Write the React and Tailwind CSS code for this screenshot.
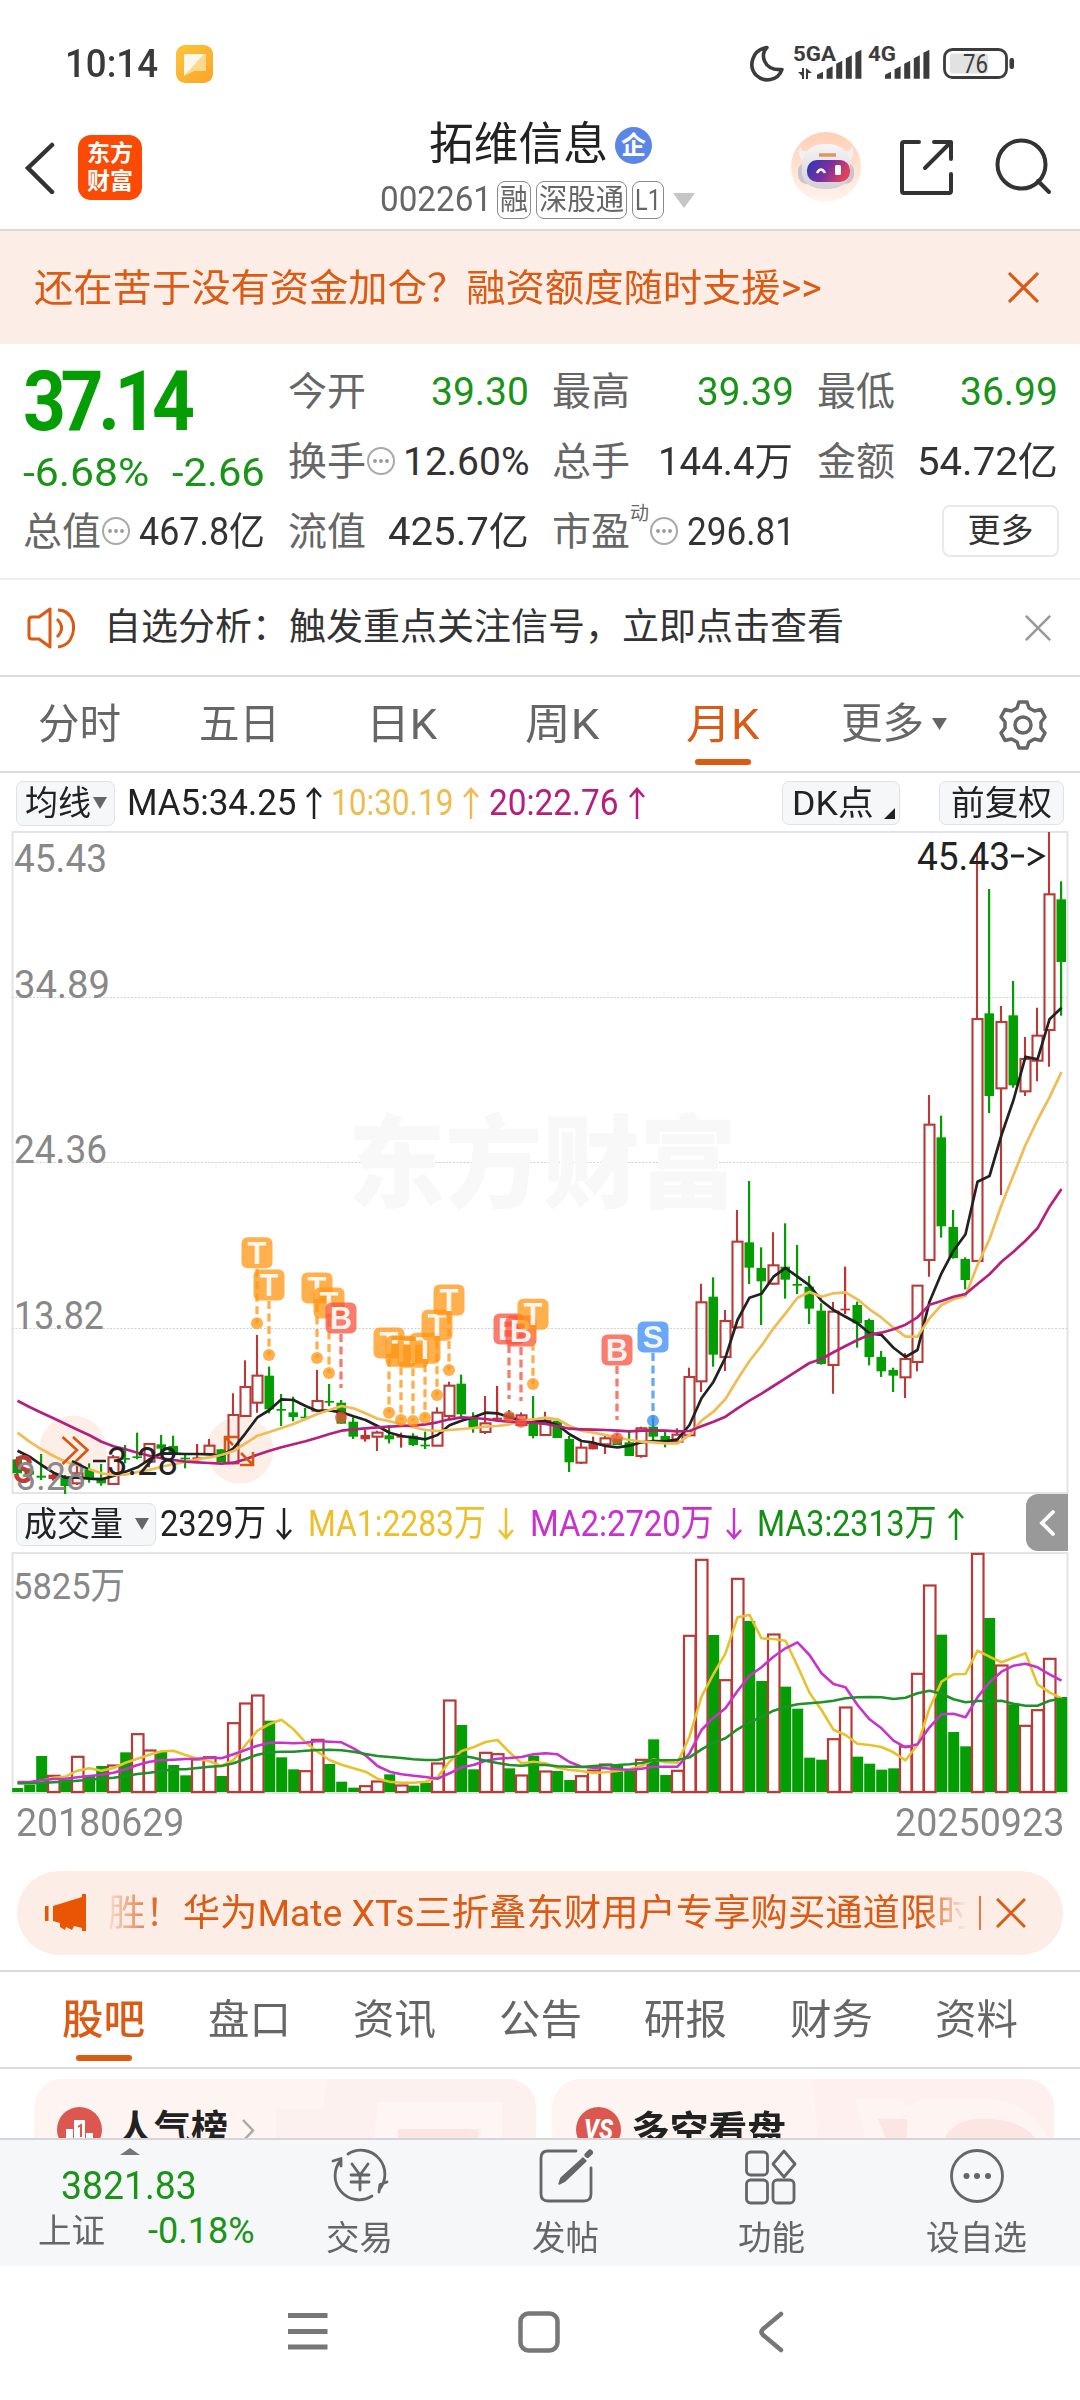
import React, { useLayoutEffect, useRef } from "react";

/* Text squeezed or stretched horizontally to an exact width. */
function Fit({ w, className = "", children }) {
  const ref = useRef(null);
  useLayoutEffect(() => {
    const el = ref.current;
    el.style.transform = "none";
    el.style.transform = `scaleX(${w / el.offsetWidth})`;
  }, [w]);
  return (
    <span className={"block shrink-0 " + className} style={{ width: w }}>
      <span ref={ref} className="inline-block origin-left whitespace-nowrap">
        {children}
      </span>
    </span>
  );
}

/* ---------- price data: [kind, bodyTop, bodyBottom, wickTop, wickBottom] ---------- */
const CANDLES = [
  ["g", 838, 880, 830, 890], ["g", 872, 884, 865, 890], ["g", 887, 893, 822, 900], ["r", 884, 897, 880, 902],
  ["g", 893, 918, 885, 942], ["h", 880, 910, 850, 915], ["g", 868, 895, 850, 908], ["g", 893, 910, 852, 917],
  ["h", 832, 912, 825, 912], ["g", 834, 839, 795, 850], ["g", 829, 834, 758, 838], ["h", 792, 845, 790, 862],
  ["g", 793, 806, 765, 820], ["g", 798, 822, 767, 830], ["g", 833, 838, 820, 865], ["r", 832, 840, 792, 845],
  ["h", 797, 822, 777, 822], ["g", 808, 846, 808, 846], ["h", 705, 850, 640, 853], ["h", 621, 708, 541, 708],
  ["h", 587, 668, 465, 698], ["g", 587, 688, 560, 700], ["g", 687, 692, 642, 738], ["g", 697, 711, 650, 724],
  ["g", 710, 715, 684, 718], ["h", 663, 692, 570, 692], ["g", 663, 668, 612, 678], ["g", 668, 731, 660, 731],
  ["g", 725, 770, 712, 777], ["r", 765, 778, 750, 785], ["h", 758, 770, 752, 813], ["g", 766, 778, 735, 790],
  ["r", 768, 773, 758, 803], ["g", 767, 795, 760, 798], ["g", 794, 799, 755, 807], ["h", 698, 797, 682, 797],
  ["h", 617, 708, 605, 718], ["g", 611, 703, 584, 710], ["g", 713, 746, 697, 758], ["h", 730, 756, 648, 762],
  ["r", 713, 719, 618, 719], ["g", 700, 718, 690, 718], ["h", 706, 735, 697, 735], ["g", 720, 768, 648, 775],
  ["h", 722, 765, 695, 768], ["g", 722, 774, 722, 774], ["g", 777, 847, 768, 876], ["h", 803, 848, 787, 852],
  ["r", 790, 808, 770, 808], ["h", 775, 793, 765, 822], ["g", 775, 795, 760, 795], ["g", 787, 828, 750, 828],
  ["h", 745, 828, 740, 833], ["g", 740, 770, 715, 780], ["g", 768, 783, 753, 802], ["h", 764, 785, 745, 785],
  ["h", 591, 766, 563, 766], ["h", 367, 604, 311, 636], ["g", 350, 524, 292, 560], ["h", 423, 531, 390, 573],
  ["h", 185, 442, 90, 446], ["g", 187, 263, 3, 312], ["g", 264, 304, 202, 435], ["h", 256, 311, 157, 315],
  ["g", 260, 299, 130, 356], ["g", 312, 317, 195, 342], ["g", 320, 386, 288, 432], ["g", 392, 552, 370, 554],
  ["h", 395, 555, 366, 641], ["r", 386, 391, 260, 402], ["g", 375, 430, 365, 503], ["g", 420, 531, 416, 556],
  ["g", 531, 574, 513, 591], ["g", 570, 587, 563, 636], ["h", 537, 592, 519, 654], ["h", 317, 546, 317, 574],
  ["h", -166, 240, -255, 290], ["g", -128, 139, -193, 173], ["g", 141, 234, 90, 236], ["g", 237, 300, 232, 328],
  ["h", -483, 243, -987, 243], ["g", -500, -252, -873, -201], ["h", -474, -275, -522, 45], ["g", -494, -284, -597, -277],
  ["h", -363, -266, -429, -252], ["h", -433, -358, -517, -296], ["h", -857, -450, -1044, -340], ["g", -842, -654, -896, -493],
];
const MA5 = [812, 830, 855, 878, 893, 893, 896, 898, 888, 875, 862, 838, 820, 821, 822, 822, 823, 828, 805, 760, 712, 690, 658, 660, 678, 693, 691, 697, 709, 720, 738, 758, 768, 773, 778, 765, 736, 722, 712, 698, 700, 712, 722, 725, 724, 735, 763, 783, 788, 798, 802, 797, 787, 783, 784, 778, 735, 655, 605, 532, 420, 353, 341, 290, 264, 290, 316, 362, 390, 410, 430, 460, 465, 503, 531, 510, 365, 280, 212, 163, 5, -12, -135, -240, -370, -362, -482, -517];
const MA10 = [758, 785, 808, 828, 845, 855, 868, 880, 885, 884, 876, 870, 860, 853, 845, 838, 832, 825, 813, 790, 767, 756, 744, 732, 717, 702, 690, 678, 685, 700, 716, 724, 733, 742, 750, 753, 750, 747, 744, 740, 738, 733, 722, 718, 713, 718, 738, 752, 758, 765, 772, 780, 785, 787, 790, 790, 765, 722, 695, 657, 598, 543, 497, 445, 400, 353, 336, 350, 340, 337, 358, 388, 413, 443, 470, 470, 415, 375, 358, 347, 255, 178, 75, -15, -105, -180, -248, -324];
const MA20 = [662, 681, 698, 715, 732, 749, 766, 785, 799, 808, 818, 827, 835, 840, 845, 847, 849, 851, 848, 838, 824, 812, 802, 793, 784, 773, 762, 752, 748, 745, 742, 740, 738, 737, 733, 727, 718, 712, 714, 717, 722, 725, 727, 728, 732, 738, 746, 748, 749, 750, 752, 754, 752, 751, 752, 754, 753, 739, 725, 710, 685, 662, 641, 618, 595, 572, 549, 537, 517, 498, 480, 464, 458, 448, 434, 412, 374, 363, 350, 342, 312, 283, 245, 215, 182, 145, 80, 27];
/* trade markers: [index, letter, badgeY, dotY] */
const MARKS = [
  [20, "T", 218, 430], [21, "T", 315, 525], [25, "T", 324, 534], [26, "T", 369, 579], [27, "B", 414, 712],
  [31, "T", 489, 698], [32, "T", 514, 720], [33, "T", 517, 723], [34, "T", 505, 713], [35, "T", 436, 645], [36, "T", 360, 570],
  [41, "B", 447, 710], [42, "B", 453, 725], [43, "T", 403, 612], [50, "B", 510, 775], [53, "S", 471, 722],
];
const MARK_COLOR = { T: "#ff9410", B: "#f8503c", S: "#3a8af5" };

const VOL = "894g 884g 798g 856r 868g 799r 857g 828g 825r 787g 731r 780r 786g 825g 856g 807r 800r 858g 698r 639r 615r 692g 802g 838g 842r 748r 822g 875g 893g 887r 873r 853g 885r 887g 878g 819r 630r 705g 838g 787r 791r 835g 855r 797g 843r 843g 870g 857r 840r 822r 828g 842g 808r 748g 855g 841r 436r 208r 435g 569r 265r 393g 573g 432r 590g 656g 803g 809g 746r 651r 800g 821g 839g 835g 768r 550r 285r 434g 726g 769g 190r 384g 525r 643g 706r 659r 505r 621g".split(" ");
const VMA1 = [880, 879, 872, 863, 860, 842, 835, 842, 834, 818, 806, 794, 784, 782, 795, 806, 814, 828, 810, 765, 722, 702, 689, 718, 757, 785, 810, 824, 835, 845, 866, 875, 878, 878, 875, 862, 815, 783, 772, 756, 750, 787, 820, 815, 820, 833, 840, 843, 849, 847, 843, 838, 828, 808, 817, 818, 740, 620, 552, 490, 382, 375, 445, 447, 452, 528, 608, 660, 719, 735, 761, 765, 771, 787, 811, 765, 655, 575, 553, 552, 482, 500, 517, 503, 490, 583, 607, 625];
const VMA2 = [876, 876, 871, 867, 866, 862, 858, 854, 848, 838, 825, 815, 811, 809, 807, 806, 803, 805, 793, 780, 767, 758, 758, 760, 758, 753, 755, 757, 775, 796, 828, 845, 853, 857, 861, 866, 850, 832, 825, 812, 806, 804, 801, 793, 790, 793, 816, 830, 833, 835, 838, 840, 836, 830, 830, 830, 790, 720, 683, 655, 603, 557, 532, 500, 475, 457, 495, 550, 582, 592, 645, 688, 715, 752, 772, 763, 712, 673, 671, 682, 622, 577, 545, 527, 521, 532, 553, 572];
const VMA3 = [880, 880, 879, 877, 875, 872, 869, 866, 863, 858, 852, 848, 843, 838, 838, 834, 830, 828, 820, 807, 794, 787, 785, 785, 782, 780, 779, 781, 785, 792, 798, 801, 804, 808, 810, 810, 802, 797, 803, 812, 819, 825, 827, 824, 825, 829, 830, 831, 828, 826, 825, 823, 819, 810, 811, 810, 802, 778, 758, 745, 718, 697, 681, 662, 651, 643, 640, 637, 632, 625, 622, 621, 622, 627, 623, 610, 602, 611, 628, 637, 633, 633, 632, 641, 647, 647, 632, 626];

const cx = (i) => 17.5 + 12 * i;
const py = (v) => v / 3 + 1180;
const vy = (v) => v / 3 + 1490;
const path = (arr, f) => arr.map((v, i) => `${i ? "L" : "M"}${cx(i).toFixed(1)} ${f(v).toFixed(1)}`).join("");

const RED = "#b93a36";
const GREEN = "#049e04";

function Label({ x, y, w, size = 38, fill = "#888", children, ...rest }) {
  return (
    <text x={x} y={y} fontSize={size} fill={fill} textLength={w} lengthAdjust="spacingAndGlyphs" {...rest}>
      {children}
    </text>
  );
}

function PriceChart() {
  return (
    <svg width="1080" height="661" viewBox="0 832 1080 661" className="block overflow-visible">
      <g fill="none" stroke="#e1e1e3" strokeWidth="1.8">
        <rect x="12.5" y="832" width="1055" height="661" />
      </g>
      <g stroke="#d2d2d2" strokeWidth="1" strokeDasharray="2 1.5">
        <path d="M12 997.5H1067M12 1162.5H1067M12 1328.5H1067" />
      </g>
      <Label x="348" y="1200" w="389" size="101" fill="#f8f8f8" fontWeight="900">东方财富</Label>
      <circle cx="73" cy="1449" r="33.5" fill="#fdeee8" />
      <circle cx="240" cy="1450" r="33.5" fill="#fdeee8" />
      <Label x="14" y="872" w="93">45.43</Label>
      <Label x="14" y="998" w="96">34.89</Label>
      <Label x="14" y="1163" w="93">24.36</Label>
      <Label x="14" y="1329" w="90">13.82</Label>
      {CANDLES.map(([k, t, b, h, l], i) => {
        const x = cx(i);
        const T = py(t), B = py(b);
        if (k === "h")
          return (
            <g key={i} stroke={RED} strokeWidth="2.1" fill="none">
              <path d={`M${x - 0.5} ${py(h)}V${T}M${x - 0.5} ${B}V${py(l)}`} />
              <rect x={x - 5} y={T} width="10" height={Math.max(B - T, 1)} />
            </g>
          );
        const c = k === "r" ? "#c23030" : GREEN;
        return (
          <g key={i} fill={c}>
            <rect x={x - 1.5} y={py(h)} width="2.2" height={(l - h) / 3} />
            <rect x={x - 5} y={T} width="9.5" height={B - T} />
          </g>
        );
      })}
      <g fill="none" strokeWidth="2.7" strokeLinejoin="round">
        <path d={path(MA5, py)} stroke="#222" />
        <path d={path(MA10, py)} stroke="#efbc55" />
        <path d={path(MA20, py)} stroke="#b5207c" />
      </g>
      {MARKS.map(([i, c, y, d]) => (
        <g key={i}>
          <path d={`M${cx(i) - 0.5} ${py(y) + 16}V${py(c === "B" ? y + 210 : d)}`} stroke={MARK_COLOR[c]} strokeWidth="3.3" strokeDasharray="8 4.5" opacity=".75" />
          <circle cx={cx(i) - 0.5} cy={py(d)} r="6" fill={MARK_COLOR[c]} opacity=".75" />
          <rect x={cx(i) - 16} y={py(y) - 15.5} width="31" height="31" rx="6" fill={MARK_COLOR[c]} opacity=".75" />
          <text x={cx(i) - 0.5} y={py(y) + 11} fontSize="31" fontWeight="700" fill="#fff" opacity=".9" textAnchor="middle" className="font-['Liberation_Sans',sans-serif]">{c}</text>
        </g>
      ))}
      <g fill="none" stroke="#d9560f" strokeWidth="2.6">
        <path d="M62.500 1437L77 1450L62.500 1464M73 1437L87.500 1450L73 1464" />
        <path d="M225 1450V1437H238M225 1437L233 1445M241 1453L253 1465M253 1452V1465H240" />
      </g>
      <text x="13" y="1483" fontSize="38" fontWeight="700" fill="#c23a38" textLength="20" lengthAdjust="spacingAndGlyphs">S</text>
      <Label x="16" y="1490" w="70" fill="#8a8a8a">3.28</Label>
      <path d="M93 1461H106" stroke="#222" strokeWidth="2.5" />
      <Label x="107" y="1475" w="71" fill="#222">3.28</Label>
      <path d="M72 1461L88 1469" stroke="#222" strokeWidth="2.500" />
      <Label x="917" y="870" w="93" fill="#222">45.43</Label>
      <path d="M1011 856H1024M1028 848L1043 856L1028 865" stroke="#222" strokeWidth="2.8" fill="none" />
    </svg>
  );
}

function VolumeChart() {
  return (
    <svg width="1080" height="244" viewBox="0 1552 1080 244" className="block">
      <rect x="12.5" y="1553" width="1055" height="240" fill="none" stroke="#e1e1e3" strokeWidth="1.8" />
      <Label x="13" y="1599" w="112" size="37">5825万</Label>
      {VOL.map((s, i) => {
        const y = vy(parseInt(s, 10));
        return s.endsWith("g") ? (
          <rect key={i} x={cx(i) - 5.3} y={y} width="11" height={1792 - y} fill={GREEN} />
        ) : (
          <rect key={i} x={cx(i) - 5.5} y={y + 0.5} width="11.500" height={1791.5 - y} fill="#fff" stroke={RED} strokeWidth="2.2" />
        );
      })}
      <g fill="none" strokeWidth="2.6" strokeLinejoin="round">
        <path d={path(VMA1, vy)} stroke="#e8c22c" />
        <path d={path(VMA2, vy)} stroke="#c733cb" />
        <path d={path(VMA3, vy)} stroke="#20902a" />
      </g>
    </svg>
  );
}

const Arrow = ({ up, className }) => (
  <svg width="18" height="34" viewBox="0 0 18 34" fill="none" stroke="currentColor" strokeWidth="2.5" className={"shrink-0 " + className}>
    {up ? <path d="M9 33V3M2 11L9 3L16 11" /> : <path d="M9 1V31M2 23L9 31L16 23" />}
  </svg>
);

const Cross = ({ size, w = 3, className = "" }) => (
  <svg width={size} height={size} viewBox="0 0 30 30" fill="none" stroke="currentColor" strokeWidth={w} className={"shrink-0 " + className}>
    <path d="M1 1L29 29M29 1L1 29" />
  </svg>
);

const Info = () => (
  <svg width="30" height="30" viewBox="0 0 30 30" className="mt-[-2px] shrink-0">
    <circle cx="15" cy="15" r="13" fill="none" stroke="#a9a9a9" strokeWidth="2" />
    <g fill="#999"><circle cx="9" cy="15" r="1.900" /><circle cx="15" cy="15" r="1.900" /><circle cx="21" cy="15" r="1.900" /></g>
  </svg>
);

function StatusBar() {
  const bars = (x0) =>
    [7, 12.500, 18, 23.500, 29].map((h, k) => (
      <path key={k} d={`M${x0 + k * 9.6} ${34.700 - h + 3}l6 -3V34.700h-6z`} fill="#3c3c3c" />
    ));
  return (
    <div className="flex h-[104px] items-start pt-[44px] pl-[65px]">
      <Fit w={93} className="text-[39px] leading-[41px] font-medium text-[#3a3a3a]">10:14</Fit>
      <svg width="38" height="38" viewBox="0 0 38 38" className="mt-[1px] ml-[18px]">
        <defs>
          <linearGradient id="note" x1="0" y1="0" x2="1" y2="1"><stop offset="0" stopColor="#fbc63c" /><stop offset="1" stopColor="#fba428" /></linearGradient>
        </defs>
        <rect width="37" height="38" rx="9" fill="url(#note)" />
        <path d="M8 9H30V26H18L8 31Z" fill="#fcd98c" />
        <path d="M8 9H28L8 31Z" fill="#fff8ea" />
      </svg>
      <svg width="268" height="42" viewBox="0 0 268 42" className="ml-[536px] overflow-visible">
        <path d="M17 3.500C10 9 12.500 27 32 25.500C28 37 14 39 6 31C-2 22 2 6 17 3.500Z" fill="none" stroke="#3c3c3c" strokeWidth="3.600" strokeLinejoin="round" />
        <text x="43" y="17" fontSize="21" fontWeight="700" fill="#3c3c3c" textLength="43" lengthAdjust="spacingAndGlyphs">5GA</text>
        <path d="M54 24v11h-2v-3l-4-4h4v-4zM58 25v10h-2V24l6 5h-4z" fill="#3c3c3c" />
        {bars(67)}
        <text x="118" y="17" fontSize="21" fontWeight="700" fill="#3c3c3c" textLength="28" lengthAdjust="spacingAndGlyphs">4G</text>
        {bars(135)}
        <rect x="194.500" y="5.500" width="62" height="28" rx="8" fill="none" stroke="#3c3c3c" strokeWidth="2.800" />
        <rect x="200" y="9.500" width="38" height="20" rx="3" fill="#e2e2e2" />
        <rect x="259.500" y="14" width="4.500" height="11" rx="2" fill="#3c3c3c" />
        <text x="213" y="29" fontSize="26" fill="#3c3c3c" textLength="25" lengthAdjust="spacingAndGlyphs">76</text>
      </svg>
    </div>
  );
}

const Tag = ({ w, children }) => (
  <span className="flex h-[38px] items-center rounded-[8px] border-[1.5px] border-[#8a8a8a] px-[2px] text-[29px] leading-none text-[#666]">
    <Fit w={w}>{children}</Fit>
  </span>
);

function Header() {
  return (
    <div className="flex h-[127px] items-start border-b-2 border-[#d9dadc]">
      <div className="flex w-[380px] items-center pt-[31px] pl-[24px]">
        <svg width="32" height="52" viewBox="0 0 32 52" fill="none" stroke="#333" strokeWidth="4.500" strokeLinecap="round"><path d="M28 3L4 26L28 50" /></svg>
        <div className="ml-[22px] grid h-[65px] w-[64px] grid-cols-1 content-center justify-items-center rounded-[13px] bg-[#fa4a04] text-[23px] leading-[28px] font-bold text-white">
          <span>东方</span>
          <span>财富</span>
        </div>
      </div>
      <div className="w-[331px] pt-[15px]">
        <div className="flex h-[52px] items-center pl-[49px]">
          <Fit w={179} className="text-[45px] leading-[52px] text-[#222]">拓维信息</Fit>
          <span className="ml-[7px] flex size-[37px] items-center justify-center rounded-full bg-[#5b86e6] text-[25px] leading-none font-bold text-white">企</span>
        </div>
        <div className="mt-[9px] flex h-[40px] items-center gap-[5px]">
          <Fit w={112} className="text-[35px] leading-[40px] text-[#666]">002261</Fit>
          <Tag w={28}>融</Tag>
          <Tag w={85}>深股通</Tag>
          <Tag w={26}>L1</Tag>
          <svg width="22" height="15" viewBox="0 0 22 15" className="ml-[4px]"><path d="M0 0H22L11 15Z" fill="#c6c6c6" /></svg>
        </div>
      </div>
      <svg width="280" height="80" viewBox="0 0 280 80" className="mt-[27px] ml-[69px]" fill="none">
        <defs>
          <linearGradient id="halo" x1="0" y1="0" x2="0" y2="1"><stop offset="0" stopColor="#ffcfb4" /><stop offset="1" stopColor="#fff4ee" /></linearGradient>
          <linearGradient id="visor" x1="0" y1="0" x2="1" y2=".3"><stop offset="0" stopColor="#2a3ab4" /><stop offset=".55" stopColor="#7a2fa0" /><stop offset="1" stopColor="#e0405c" /></linearGradient>
          <linearGradient id="head" x1="0" y1="0" x2="0" y2="1"><stop offset="0" stopColor="#f7f5f6" /><stop offset="1" stopColor="#d3cfd6" /></linearGradient>
        </defs>
        <circle cx="46" cy="36" r="35" fill="url(#halo)" />
        <path d="M20 15q2 8 9 4l-5 12q-8-6-4-16zM72 15q-2 8-9 4l5 12q8-6 4-16z" fill="#f3f0f1" />
        <rect x="18" y="31" width="56" height="22" rx="9" fill="#c9c5cd" />
        <path d="M22 34Q23 13 46 13Q69 13 70 34V44Q66 58 46 58Q26 58 22 44Z" fill="url(#head)" />
        <path d="M39 24h17" stroke="#d99a62" strokeWidth="3.500" />
        <rect x="27" y="29" width="43" height="22" rx="10" fill="url(#visor)" />
        <path d="M37 42q4-7 8 0" stroke="#fff" strokeWidth="2.500" />
        <rect x="55" y="34" width="6" height="10" rx="1.500" fill="#fff" />
        <g stroke="#333" strokeWidth="4" strokeLinecap="round" strokeLinejoin="round">
          <path d="M139 11H124Q122 11 122 13V60Q122 62 124 62H169Q171 62 171 60V43M154 11H171V28M171 11L145 37" />
          <circle cx="241.500" cy="33.500" r="24" />
          <path d="M258 50L269 61" />
        </g>
      </svg>
    </div>
  );
}

const G = "text-[#1a9418]";
const D = "text-[#333]";
function Stat({ label, value, lw = 78, vw, color = D, info, sup, w }) {
  return (
    <div className="flex h-[70px] items-center justify-between" style={{ width: w }}>
      <div className="flex items-center">
        <Fit w={lw} className="text-[39px] text-[#666]">{label}</Fit>
        {sup && <span className="mt-[-38px] text-[19px] leading-none text-[#666]">{sup}</span>}
        {info && <Info />}
      </div>
      <Fit w={vw} className={"text-[39px] " + color}>{value}</Fit>
    </div>
  );
}

function Quote() {
  return (
    <div className="flex h-[234px] pt-[13px] pl-[23px] leading-[50px]">
      <div className="w-[265px]">
        <Fit w={167} className="h-[84px] text-[83px] leading-[90px] font-bold tracking-[-6px] text-[#049e04]">37.14</Fit>
        <div className="flex h-[62px] items-center pt-[2px]">
          <Fit w={126} className={"text-[39px] " + G}>-6.68%</Fit>
          <Fit w={93} className={"ml-[23px] text-[39px] " + G}>-2.66</Fit>
        </div>
        <div className="mt-[-6px]"><Stat label="总值" info value="467.8亿" vw={126} w={242} /></div>
      </div>
      <div className="w-[264px]">
        <Stat label="今开" value="39.30" vw={98} color={G} w={241} />
        <Stat label="换手" info value="12.60%" vw={127} w={242} />
        <Stat label="流值" value="425.7亿" vw={141} w={241} />
      </div>
      <div className="w-[265px]">
        <Stat label="最高" value="39.39" vw={97} color={G} w={242} />
        <Stat label="总手" value="144.4万" vw={135} w={241} />
        <Stat label="市盈" sup="动" info value="296.81" vw={108} w={243} />
      </div>
      <div>
        <Stat label="最低" value="36.99" vw={98} color={G} w={241} />
        <Stat label="金额" value="54.72亿" vw={141} w={241} />
        <div className="mt-[8px] ml-[125px] flex h-[52px] w-[117px] items-center justify-center rounded-[8px] border-2 border-[#e9e9eb] text-[33px] text-[#333]">更多</div>
      </div>
    </div>
  );
}

function PeriodTabs() {
  const tabs = [["分时", 83, 159], ["五日", 81, 161], ["日K", 71, 162], ["周K", 74, 160], ["月K", 73, 161]];
  return (
    <div className="flex h-[98px] items-center border-y-2 border-[#dcdcde] text-[42px] leading-[56px] text-[#666]">
      {tabs.map(([t, w, cell], i) => (
        <div key={t} className={"relative flex h-full items-center justify-center pt-[1px] " + (i === 4 ? "text-[#db5a14]" : "")} style={{ width: cell }}>
          <Fit w={w}>{t}</Fit>
          {i === 4 && <span className="absolute bottom-[6px] h-[6px] w-[56px] rounded-full bg-[#db5a14]" />}
        </div>
      ))}
      <Fit w={83} className="ml-[38px]">更多</Fit>
      <svg width="15" height="12" viewBox="0 0 15 12" className="ml-[8px]"><path d="M0 0H15L7.500 12Z" fill="#666" /></svg>
      <svg width="48" height="50" viewBox="0 0 48 50" className="mt-[2px] ml-[52px]" fill="none" stroke="#666" strokeWidth="3.500" strokeLinejoin="round">
        <path d="M20 2H28L30 8L35.500 11L42 9.500L46 17L42 22V28L46 33L42 40.500L35.500 39L30 42L28 48H20L18 42L12.500 39L6 40.500L2 33L6 28V22L2 17L6 9.500L12.500 11L18 8Z" />
        <circle cx="24" cy="25" r="8" />
      </svg>
    </div>
  );
}

const Pill = ({ className, children }) => (
  <div className={"flex items-center justify-center rounded-[7px] border-[1.5px] border-[#dfe2e7] bg-[#f6f7f9] text-[34px] leading-[40px] text-[#222] " + className}>{children}</div>
);
const Down = ({ className = "" }) => <svg width="14" height="12" viewBox="0 0 14 12" className={"shrink-0 " + className}><path d="M0 0H14L7 12Z" fill="#666" /></svg>;

function MaRow() {
  return (
    <div className="flex h-[59px] items-center pt-[1px] pl-[16px] text-[37px] leading-[44px]">
      <Pill className="h-[45px] w-[99px] gap-[2px]"><Fit w={66}>均线</Fit><Down /></Pill>
      <Fit w={169} className="ml-[12px] text-[#222]">MA5:34.25</Fit>
      <Arrow up className="ml-[9px] text-[#222]" />
      <Fit w={122} className="ml-[8px] text-[#f0bb4c]">10:30.19</Fit>
      <Arrow up className="ml-[9px] text-[#f0bb4c]" />
      <Fit w={129} className="ml-[9px] text-[#b81d7d]">20:22.76</Fit>
      <Arrow up className="ml-[10px] text-[#b81d7d]" />
      <Pill className="ml-[136px] h-[44px] w-[118px] !justify-start pl-[9px]">
        <Fit w={82}>DK点</Fit>
        <svg width="11" height="11" viewBox="0 0 11 11" className="mt-[20px] ml-[10px]"><path d="M11 0V11H0Z" fill="#222" /></svg>
      </Pill>
      <Pill className="ml-[39px] h-[44px] w-[125px]"><Fit w={101}>前复权</Fit></Pill>
    </div>
  );
}

function VolRow() {
  return (
    <div className="flex h-[59px] items-center pt-[3px] pl-[16px] text-[37px] leading-[44px]">
      <Pill className="h-[43px] w-[140px] gap-[12px]"><Fit w={99}>成交量</Fit><Down /></Pill>
      <Fit w={106} className="ml-[4px] text-[#222]">2329万</Fit>
      <Arrow className="ml-[9px] text-[#222]" />
      <Fit w={178} className="ml-[15px] text-[#edbf28]">MA1:2283万</Fit>
      <Arrow className="ml-[11px] text-[#edbf28]" />
      <Fit w={184} className="ml-[15px] text-[#ca2fcf]">MA2:2720万</Fit>
      <Arrow className="ml-[11px] text-[#ca2fcf]" />
      <Fit w={180} className="ml-[14px] text-[#148f14]">MA3:2313万</Fit>
      <Arrow up className="ml-[10px] text-[#148f14]" />
      <div className="mt-[-3px] ml-[61px] flex h-[57px] w-[42px] items-center justify-center rounded-l-[12px] bg-[#999]">
        <svg width="16" height="28" viewBox="0 0 16 28" fill="none" stroke="#fff" strokeWidth="3.800" strokeLinecap="round"><path d="M14 3L3 14L14 25" /></svg>
      </div>
    </div>
  );
}

function Promo() {
  return (
    <div className="mx-[17px] mt-[24px] flex h-[84px] items-center rounded-full bg-[#fceee6] pl-[27px] text-[#db5a14]">
      <svg width="44" height="38" viewBox="0 0 44 38" fill="#e95502" className="shrink-0"><path d="M1 12H4.500V27H1zM9 12L38 3V0H42V37H38V34L30 32L28 36L22 33L21 36L16 33V29L9 27z" /></svg>
      <div className="ml-[13px] flex h-[60px] w-[866px] items-center overflow-hidden pt-[1px] pl-[7px] text-[37px] leading-[50px] [mask-image:linear-gradient(90deg,transparent,#000_7%,#000_95%,transparent)]">
        <Fit w={867}>胜！华为Mate XTs三折叠东财用户专享购买通道限时</Fit>
      </div>
      <span className="ml-[12px] h-[34px] w-[2px] shrink-0 bg-[#e57a3e]" />
      <Cross size={30} w={3} className="ml-[15px]" />
    </div>
  );
}

function SectionTabs() {
  return (
    <div className="mt-[15px] flex h-[99px] items-center border-y-2 border-[#d9dadc] pl-[31px] text-[41px] leading-[56px] text-[#666]">
      {["股吧", "盘口", "资讯", "公告", "研报", "财务", "资料"].map((t, i) => (
        <div key={t} className={"relative flex h-full w-[145.5px] items-center justify-center pt-[1px] " + (i ? "" : "font-medium text-[#db5a14]")}>
          <Fit w={83}>{t}</Fit>
          {!i && <span className="absolute bottom-[6px] h-[6px] w-[56px] rounded-full bg-[#db5a14]" />}
        </div>
      ))}
    </div>
  );
}

function Cards() {
  return (
    <div className="flex h-[69px] gap-[16px] overflow-hidden pt-[10px] pl-[34px]">
      <div className="relative flex h-[100px] w-[502px] shrink-0 overflow-hidden rounded-t-[28px] bg-[#fef5f3] pt-[28px] pl-[23px]">
        <svg width="260" height="60" viewBox="0 0 260 60" className="absolute top-0 right-0">
          <path d="M50 0H260V60H0V30H47Z" fill="#fdf1ef" /><path d="M102 23H226V60H205V50H122V60H98Z" fill="#fef6f4" /><path d="M122 50H202V60H122Z" fill="#fce5e2" />
        </svg>
        <svg width="45" height="45" viewBox="0 0 45 45" className="shrink-0"><circle cx="22.500" cy="22.500" r="22.500" fill="#dc5750" /><path d="M9 22h7v18H9zM17 13h11v27H17zM29 26h7v14h-7z" fill="#fff" /><path d="M21 20l3-2v12" fill="none" stroke="#dc5750" strokeWidth="2" /></svg>
        <Fit w={111} className="ml-[15px] mt-[-2px] text-[37px] leading-[50px] font-bold text-[#222]">人气榜</Fit>
        <svg width="14" height="25" viewBox="0 0 14 25" fill="none" stroke="#aaa" strokeWidth="2.500" className="mt-[11px] ml-[13px]"><path d="M2 2L12 12.500L2 23" /></svg>
      </div>
      <div className="relative flex h-[100px] w-[502px] shrink-0 overflow-hidden rounded-t-[28px] bg-[#fef5f3] pt-[28px] pl-[24px]">
        <svg width="250" height="60" viewBox="0 0 250 60" className="absolute top-0 right-0">
          <path d="M8 0H250V60H14Z" fill="#fdf0ee" /><path d="M52 20H95L103 27L118 20H180Q225 20 245 60H62Z" fill="#fef5f3" /><path d="M74 40H103V60H82ZM140 60Q150 40 175 40Q215 38 232 60Z" fill="#fce6e3" />
        </svg>
        <svg width="45" height="45" viewBox="0 0 45 45" className="shrink-0"><circle cx="22.500" cy="22.500" r="22.500" fill="#dc5750" /><text x="8" y="32" fontSize="27" fontWeight="800" fontStyle="italic" fill="#fff" textLength="29" lengthAdjust="spacingAndGlyphs">VS</text></svg>
        <Fit w={155} className="ml-[10px] mt-[-2px] text-[38px] leading-[50px] font-bold text-[#222]">多空看盘</Fit>
      </div>
    </div>
  );
}

const ICONS = [
  <g key="a"><path d="M18 8A24 24 0 0 1 49 44M42 50A24 24 0 0 1 11 14M3 15L11 12.500V20M57 36L50 38.500L49 46" /><path d="M22 18L30 29L38 18M30 29V44M21 29H39M21 36H39" /></g>,
  <g key="b"><path d="M40 5H12Q5 5 5 12V48Q5 55 12 55H48Q55 55 55 48V22" /><path d="M23 38L25 32L47 12L50 15L29 35Z" fill="#666" strokeWidth="1.500" /><path d="M51.500 9L54 6.500" strokeWidth="6" /></g>,
  <g key="c"><rect x="5.500" y="6" width="21" height="23" rx="4" /><rect x="5.500" y="34" width="21" height="23" rx="4" /><rect x="32" y="34" width="21" height="23" rx="4" /><path d="M43 5L54 18L43 31L32 18Z" /></g>,
  <g key="d"><circle cx="30" cy="30" r="25.500" /><g fill="#666" stroke="none"><circle cx="19.500" cy="30" r="3" /><circle cx="30" cy="30" r="3" /><circle cx="41" cy="30" r="3" /></g></g>,
];

function BottomBar() {
  return (
    <div className="flex h-[128px] border-t-2 border-[#d4d6d9] bg-[#f6f7f9]">
      <div className="w-[257px] pt-[8px]">
        <svg width="20" height="7" viewBox="0 0 20 7" className="ml-[120px] block"><path d="M0 7L10 0L20 7Z" fill="#777" /></svg>
        <Fit w={136} className={"mt-[6px] ml-[61px] text-[39px] leading-[50px] " + G}>3821.83</Fit>
        <div className="mt-[-3px] flex items-center leading-[46px]">
          <Fit w={67} className="ml-[38px] text-[34px] text-[#666]">上证</Fit>
          <Fit w={107} className={"ml-[43px] text-[36px] " + G}>-0.18%</Fit>
        </div>
      </div>
      {["交易", "发帖", "功能", "设自选"].map((t, i) => (
        <div key={t} className="flex w-[205.7px] flex-col items-center pt-[6px]">
          <svg width="60" height="60" viewBox="0 0 60 60" fill="none" stroke="#666" strokeWidth="2.800" strokeLinecap="round" strokeLinejoin="round">{ICONS[i]}</svg>
          <Fit w={i === 3 ? 101 : 67} className="mt-[8px] text-[34px] leading-[48px] text-[#666]">{t}</Fit>
        </div>
      ))}
    </div>
  );
}

export default function App() {
  return (
    <div className="h-[2400px] w-[1080px] overflow-hidden bg-white font-[Roboto,'Noto_Sans_CJK_SC',sans-serif]">
      <StatusBar />
      <Header />
      <div className="flex h-[113px] items-center bg-[#fceee6] pl-[34px] text-[38px] leading-[56px] text-[#db5a14]">
        <Fit w={788}>还在苦于没有资金加仓？融资额度随时支援&gt;&gt;</Fit>
        <Cross size={31} className="ml-[186px]" />
      </div>
      <Quote />
      <div className="flex h-[97px] items-center border-t-2 border-[#ececee] pl-[27px] text-[37px] leading-[56px] text-[#333]">
        <svg width="48" height="42" viewBox="0 0 48 42" fill="none" stroke="#db5a14" strokeWidth="3" strokeLinejoin="round"><path d="M23 2V40L12 32H5Q2 32 2 29V13Q2 10 5 10H12ZM30 12Q39 21 30 30M31 3Q42 3 46 15Q48 25 43 33Q39 39 31 40" /></svg>
        <Fit w={740} className="ml-[29px]">自选分析：触发重点关注信号，立即点击查看</Fit>
        <Cross size={26} w={3} className="ml-[181px] text-[#999]" />
      </div>
      <PeriodTabs />
      <MaRow />
      <PriceChart />
      <VolRow />
      <VolumeChart />
      <div className="flex h-[51px] items-center justify-between pt-[4px] pr-[16px] pl-[16px] text-[39px] leading-[47px] text-[#888]">
        <Fit w={168}>20180629</Fit>
        <Fit w={169}>20250923</Fit>
      </div>
      <Promo />
      <SectionTabs />
      <Cards />
      <BottomBar />
      <div className="flex h-[132px] items-center pl-[288px]">
        <svg width="40" height="40" viewBox="0 0 40 40" stroke="#777" strokeWidth="5"><path d="M0 3.500H39.500M0 19.500H39.500M0 35H39.500" /></svg>
        <svg width="42" height="42" viewBox="0 0 42 42" fill="none" className="ml-[190px]"><rect x="2.500" y="2.500" width="37" height="37" rx="8" stroke="#777" strokeWidth="4.500" /></svg>
        <svg width="26" height="42" viewBox="0 0 26 42" fill="none" className="ml-[198px]" stroke="#777" strokeWidth="4.500" strokeLinecap="round"><path d="M23 3L5 18Q2 21 5 24L23 39" /></svg>
      </div>
    </div>
  );
}
